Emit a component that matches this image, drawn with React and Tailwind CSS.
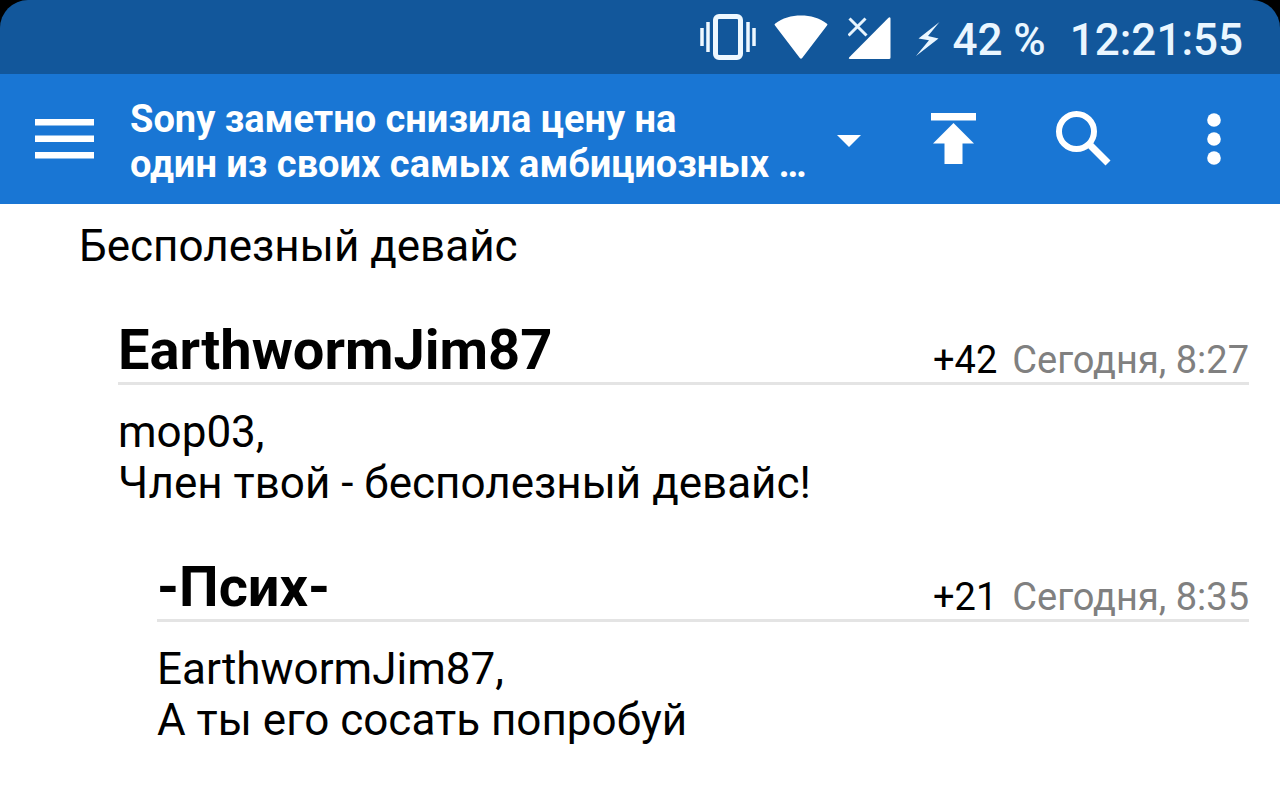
const comments = [
  {
    author: "EarthwormJim87",
    rating: "+42",
    date: "Сегодня, 8:27",
    lines: ["mop03,", "Член твой - бесполезный девайс!"],
    indent: "ml-[118px]",
  },
  {
    author: "-Псих-",
    rating: "+21",
    date: "Сегодня, 8:35",
    lines: ["EarthwormJim87,", "А ты его сосать попробуй"],
    indent: "ml-[157px]",
  },
];

/* ───────────────── Status bar icons ───────────────── */
const VibrateIcon = () => (
  <svg className="w-[56px] h-[46px]" viewBox="0 0 56 46" fill="none" stroke="#eef8ff">
    <rect x="15.500" y="2.500" width="25" height="41" rx="3.500" strokeWidth="5" />
    <path d="M2 14v18M54 14v18M8 8v30M48 8v30" strokeWidth="3.500" />
  </svg>
);

const WifiIcon = () => (
  <svg className="w-[54px] h-[46px]" viewBox="0 0 54 46" fill="#fff">
    <path d="M1 11.500Q0 10.500 1 9.700C8.500 4 17.500 1.500 27 1.500s18.500 2.500 26 8.200q1 .8 0 1.800L28.200 44q-1.200 1.500-2.400 0z" />
  </svg>
);

const NoSignalIcon = () => (
  <svg className="w-[44px] h-[46px]" viewBox="0 0 44 46">
    <path d="M42.500 4.500v39q0 1.500-1.500 1.500H2q-2-.3-.7-1.800L40.500 3.800q1.700-1.200 2 .7z" fill="#fff" />
    <path d="M1 4l18 18M18 4L1 21" stroke="#12579b" strokeWidth="6" />
    <path d="M1.500 4.500l17 17M17.500 4.500l-17 17" stroke="#e8f4fd" strokeWidth="3" />
  </svg>
);

const BoltIcon = () => (
  <svg className="w-6 h-[34px]" viewBox="0 0 24 34" fill="#eaf6ff">
    <path d="M23.500 0L2.500 16.500l10.500 1.800L0 34l22.500-17.500-10.500-2.500z" />
  </svg>
);

/* ───────────────── Toolbar icons ───────────────── */
const MenuIcon = () => (
  <svg className="w-[59px] h-10" viewBox="0 0 59 40" fill="#fff">
    <path d="M0 0h59v6.500H0zM0 16.500h59V23H0zM0 33h59v6.500H0z" />
  </svg>
);

const CaretIcon = () => (
  <svg className="mt-1 w-6 h-3" viewBox="0 0 24 12" fill="#fff">
    <path d="M0 0h24L12 12z" />
  </svg>
);

const ToTopIcon = () => (
  <svg className="w-[45px] h-[52px]" viewBox="0 0 45 52" fill="#fff">
    <path d="M0 0h45v7.500H0zM22.500 10L43 30.500H31.500V51h-18V30.500H2z" />
  </svg>
);

const SearchIcon = () => (
  <svg className="w-[55px] h-[56px]" viewBox="0 0 55 56" fill="none" stroke="#fff">
    <circle cx="20.500" cy="20.500" r="17.500" strokeWidth="6" />
    <path d="M34.500 34.500L52 52" strokeWidth="7" />
    <path d="M31.500 31.500l5 5" strokeWidth="5" />
  </svg>
);

const MoreIcon = () => (
  <svg className="w-[14px] h-[52px]" viewBox="0 0 14 52" fill="#fff">
    <circle cx="7" cy="7" r="6.800" />
    <circle cx="7" cy="26" r="6.800" />
    <circle cx="7" cy="45" r="6.800" />
  </svg>
);

function StatusBar() {
  return (
    <div className="bg-black">
      <div className="flex h-[74px] items-center justify-end rounded-t-[28px] bg-[#12579b] pr-[37px] text-[44px] leading-[52px] font-medium text-[#eaf6ff]">
        <VibrateIcon />
        <span className="ml-[18px]"><WifiIcon /></span>
        <span className="ml-5"><NoSignalIcon /></span>
        <span className="ml-6 pt-1"><BoltIcon /></span>
        <span className="ml-3 pt-1.5">42 %</span>
        <span className="ml-6 pt-1.5">12:21:55</span>
      </div>
    </div>
  );
}

function Toolbar() {
  return (
    <header className="flex h-[130px] items-center bg-[#1976d4] pr-[59px] pl-[35px] text-white">
      <button aria-label="Меню"><MenuIcon /></button>
      <button className="ml-9 flex flex-1 items-center justify-between text-left">
        <span className="pt-1.5 text-[38px] leading-[45px] font-bold">
          Sony заметно снизила цену на
          <br />
          один из своих самых амбициозных …
        </span>
        <CaretIcon />
      </button>
      <button aria-label="Наверх" className="ml-[70px]"><ToTopIcon /></button>
      <button aria-label="Поиск" className="ml-20"><SearchIcon /></button>
      <button aria-label="Ещё" className="ml-24"><MoreIcon /></button>
    </header>
  );
}

function Comment({ author, rating, date, lines, indent }) {
  return (
    <article className={`${indent} mt-[46px]`}>
      <div className="flex items-end border-b-3 border-[#e4e4e4]">
        <h2 className="flex-1 text-[56px] leading-[64px] font-bold">{author}</h2>
        <span className="text-[38px] leading-[44px]">{rating}</span>
        <span className="ml-[15px] text-[38px] leading-[44px] text-[#808080]">{date}</span>
      </div>
      <div className="mt-[22px] text-[44px] leading-[51px]">
        {lines.map((line) => (
          <p key={line}>{line}</p>
        ))}
      </div>
    </article>
  );
}

export default function App() {
  return (
    <div className="min-h-screen bg-white font-[Roboto,sans-serif] text-black">
      <StatusBar />
      <Toolbar />
      <main className="pt-[17px] pr-[31px] pb-10">
        <p className="ml-[79px] text-[44px] leading-[51px]">Бесполезный девайс</p>
        {comments.map((c) => (
          <Comment key={c.author} {...c} />
        ))}
      </main>
    </div>
  );
}
